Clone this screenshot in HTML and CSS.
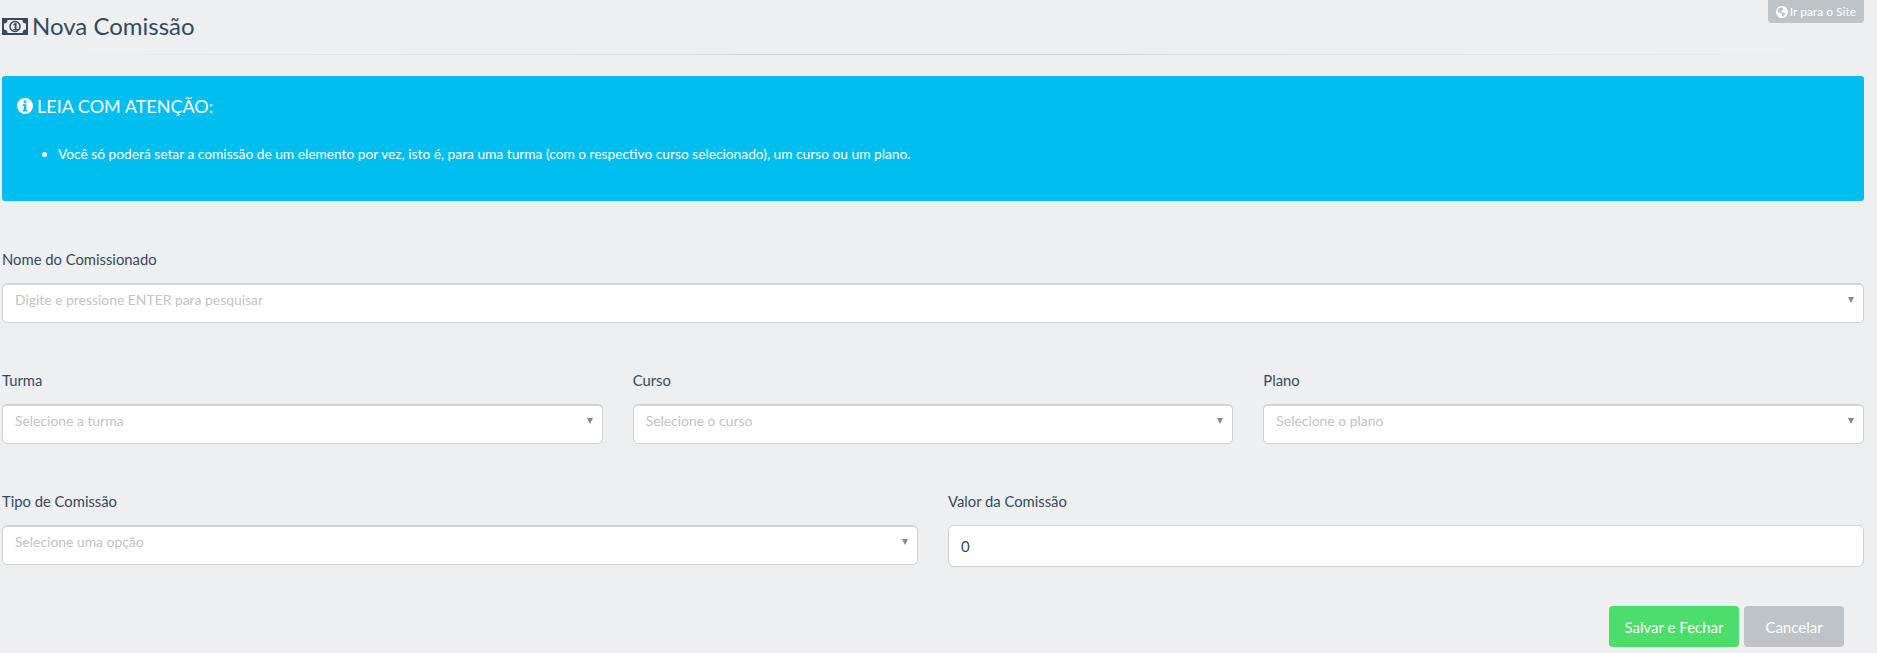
FILE: index.html
```html
<!DOCTYPE html>
<html lang="pt-BR">
<head>
    <meta charset="UTF-8">
    <meta name="viewport" content="width=device-width, initial-scale=1.0">
    <title>Nova Comissão</title>
    <link rel="stylesheet" href="styles.css">
</head>
<body>
    <a class="site-link" href="#">
        <svg class="site-icon" viewBox="0 0 16 16"><path fill-rule="evenodd" d="M8 0a8 8 0 1 0 0 16A8 8 0 0 0 8 0zM3 3.500l3-1.500 3 .5 1 2-2 1-1 2 2 1 2.500 0 1 2-3 3.500-1.500-.5V11L6 9.500 3 8 2 6z"/></svg>
        Ir para o Site
    </a>

    <h1 class="page-title">
        <svg class="money-icon" viewBox="0 0 26 17">
            <path fill-rule="evenodd" d="M0 0h26v17H0zM2 2v13h22V2z"/>
            <path d="M2 5.500A3.500 3.500 0 0 0 5.500 2H2zM24 5.500A3.500 3.500 0 0 1 20.500 2H24zM2 11.500A3.500 3.500 0 0 1 5.500 15H2zM24 11.500a3.500 3.500 0 0 0-3.500 3.500H24z"/>
            <circle class="money-ring" cx="13" cy="8.500" r="5"/>
            <path d="M11.300 6.200l2-1.200h1.200v6h1.200v1.200h-4.400V11h1.400V6.800l-1.400.6z"/>
        </svg>
        Nova Comissão
    </h1>
    <hr class="title-rule">

    <div class="alert">
        <h4 class="alert-title">
            <svg class="info-icon" viewBox="0 0 16 16"><path fill-rule="evenodd" d="M8 0a8 8 0 1 0 0 16A8 8 0 0 0 8 0zM6.700 2.500h2.600v2.300H6.700zM5.800 6.300h3.500v5.400h1v1.700H5.800v-1.700h1V8H5.800z"/></svg>
            LEIA COM ATENÇÃO:
        </h4>
        <ul class="alert-list">
            <li>Você só poderá setar a comissão de um elemento por vez, isto é, para uma turma (com o respectivo curso selecionado), um curso ou um plano.</li>
        </ul>
    </div>

    <form class="form">
        <div class="row row-name">
            <div class="field">
                <label>Nome do Comissionado</label>
                <div class="select">Digite e pressione ENTER para pesquisar</div>
            </div>
        </div>
        <div class="row row-three">
            <div class="field">
                <label>Turma</label>
                <div class="select">Selecione a turma</div>
            </div>
            <div class="field">
                <label>Curso</label>
                <div class="select">Selecione o curso</div>
            </div>
            <div class="field">
                <label>Plano</label>
                <div class="select">Selecione o plano</div>
            </div>
        </div>
        <div class="row row-two">
            <div class="field">
                <label>Tipo de Comissão</label>
                <div class="select">Selecione uma opção</div>
            </div>
            <div class="field">
                <label>Valor da Comissão</label>
                <input class="text-input" type="text" value="0">
            </div>
        </div>
        <div class="actions">
            <button class="btn btn-save" type="button">Salvar e Fechar</button>
            <button class="btn btn-cancel" type="button">Cancelar</button>
        </div>
    </form>
</body>
</html>
```

FILE: styles.css
```css
body {
    margin: 0;
    padding: 0 13px 0 2px;
    height: 653px;
    overflow: hidden;
    box-sizing: border-box;
    background-color: #eeeff1;
    color: #34495e;
    font-family: Lato, "Open Sans", sans-serif;
    font-size: 14px;
}

.site-link {
    position: absolute;
    top: 0;
    right: 13px;
    display: flex;
    align-items: center;
    gap: 2px;
    height: 23px;
    padding: 0 8px;
    background-color: #bdc3c7;
    border-radius: 0 0 4px 4px;
    color: white;
    font-size: 12px;
    font-weight: 400;
    text-decoration: none;
}

.site-icon {
    width: 12px;
    height: 12px;
    fill: white;
}

.page-title {
    display: flex;
    align-items: center;
    gap: 4px;
    margin: 0;
    padding-top: 11px;
    height: 30px;
    font-size: 24px;
    font-weight: 400;
    line-height: 30px;
}

.money-icon {
    width: 26px;
    height: 17px;
    fill: #34495e;
}

.money-ring {
    fill: none;
    stroke: #34495e;
    stroke-width: 1.500;
}

.title-rule {
    height: 1px;
    margin: 13px 0 21px;
    border: 0;
    background-image: linear-gradient(to right, rgba(0, 0, 0, 0), rgba(0, 0, 0, 0.12), rgba(0, 0, 0, 0));
}

.alert {
    box-sizing: border-box;
    height: 125px;
    padding: 17px 15px;
    background-color: #00bff0;
    border-radius: 3px;
    color: white;
}

.alert-title {
    display: flex;
    align-items: center;
    gap: 4px;
    margin: 0 0 25px;
    font-size: 18px;
    font-weight: 400;
    line-height: 26px;
}

.info-icon {
    width: 16px;
    height: 16px;
    fill: white;
}

.alert-list {
    margin: 0;
    padding-left: 41px;
    font-size: 13.750px;
    line-height: 20px;
}

.row {
    display: grid;
    column-gap: 30px;
}

.row-name {
    margin-top: 48px;
}

.row-three {
    grid-template-columns: repeat(3, 1fr);
    margin-top: 47px;
}

.row-two {
    grid-template-columns: repeat(2, 1fr);
    margin-top: 47px;
}

.field label {
    display: block;
    height: 20px;
    margin-bottom: 14px;
    font-size: 14.800px;
    line-height: 20px;
}

.select {
    position: relative;
    box-sizing: border-box;
    height: 40px;
    padding: 0 12px;
    background-color: white;
    border: 1px solid #cfd0d2;
    border-radius: 5px;
    color: #c2c4c7;
    font-size: 13.900px;
    line-height: 32px;
    box-shadow: inset 0 1px 0 #d5d6d8;
}

.select:after {
    content: "";
    position: absolute;
    top: 13px;
    right: 9px;
    border-top: 6px solid #888;
    border-left: 3.500px solid transparent;
    border-right: 3.500px solid transparent;
}

.text-input {
    display: block;
    box-sizing: border-box;
    width: 100%;
    height: 42px;
    padding: 0 12px;
    background-color: white;
    border: 1px solid #d0d1d3;
    border-radius: 6px;
    color: #34495e;
    font-family: Lato, "Open Sans", sans-serif;
    font-size: 15px;
}

.actions {
    display: flex;
    justify-content: flex-end;
    gap: 5px;
    margin-top: 39px;
    padding-right: 20px;
}

.btn {
    height: 41px;
    border: 0;
    border-radius: 4px;
    color: white;
    font-family: Lato, "Open Sans", sans-serif;
    font-size: 15px;
}

.btn-save {
    width: 130px;
    background-color: #4cdd6a;
}

.btn-cancel {
    width: 100px;
    background-color: #bdc3c7;
}
```
